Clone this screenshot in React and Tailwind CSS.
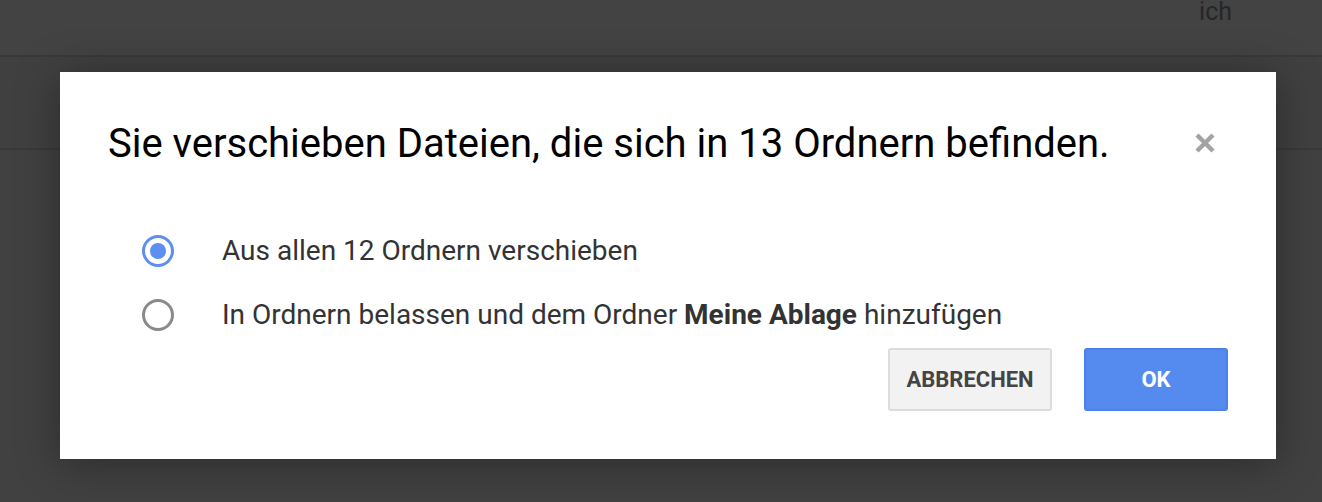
import React, { useState } from 'react';

const Radio = ({ checked, onClick }) => (
    <button
        type="button"
        onClick={onClick}
        className={`w-[32px] h-[32px] rounded-full border-[3px] flex items-center justify-center shrink-0 ${checked ? 'border-[#5c8ff0]' : 'border-[#8a8a8a]'}`}
    >
        {checked && <span className="w-[16px] h-[16px] rounded-full bg-[#5c8ff0]"></span>}
    </button>
);

const App = () => {
    const [choice, setChoice] = useState('move');

    return (
        <div className="w-[1322px] h-[502px] bg-[#414141] overflow-hidden relative font-['Roboto',sans-serif]">
            {/* Page behind the overlay */}
            <div className="h-[57px] bg-[#434343] border-b-2 border-[#393939] flex justify-end pr-[90px]">
                <span className="text-[25px] leading-[24px] text-[#262626]">ich</span>
            </div>
            <div className="h-[93px] bg-[#404040] border-b-2 border-[#393939]"></div>

            {/* Dialog */}
            <div className="absolute left-[60px] top-[72px] w-[1216px] h-[387px] bg-white shadow-[0_4px_40px_rgba(0,0,0,0.35)] px-[48px] pt-[48px]">
                <div className="flex items-start justify-between">
                    <h1 className="text-[40px] leading-[48px] text-black font-normal">
                        Sie verschieben Dateien, die sich in 13 Ordnern befinden.
                    </h1>
                    <button type="button" className="mt-[10px] mr-[10px] text-[#a3a3a3]">
                        <svg width="26" height="26" viewBox="0 0 26 26">
                            <path d="M5 5 L21 21 M21 5 L5 21" stroke="currentColor" strokeWidth="4.5" strokeLinecap="butt" />
                        </svg>
                    </button>
                </div>

                <div className="mt-[67px] pl-[34px] flex flex-col gap-[32px]">
                    <label className="flex items-center gap-[48px] cursor-pointer" onClick={() => setChoice('move')}>
                        <Radio checked={choice === 'move'} />
                        <span className="text-[28px] leading-[32px] text-[#333333]">Aus allen 12 Ordnern verschieben</span>
                    </label>
                    <label className="flex items-center gap-[48px] cursor-pointer" onClick={() => setChoice('keep')}>
                        <Radio checked={choice === 'keep'} />
                        <span className="text-[28px] leading-[32px] text-[#333333]">
                            In Ordnern belassen und dem Ordner <b className="font-bold">Meine Ablage</b> hinzufügen
                        </span>
                    </label>
                </div>

                <div className="flex justify-end gap-[32px] mt-[17px]">
                    <button type="button" className="w-[164px] h-[63px] rounded-[3px] bg-[#f2f2f2] border-2 border-[#dcdcdc] text-[22px] font-bold text-[#444444]">
                        ABBRECHEN
                    </button>
                    <button type="button" className="w-[144px] h-[63px] rounded-[3px] bg-[#558bef] border-2 border-[#4a82e8] text-[22px] font-bold text-white">
                        OK
                    </button>
                </div>
            </div>
        </div>
    );
};

export default App;
